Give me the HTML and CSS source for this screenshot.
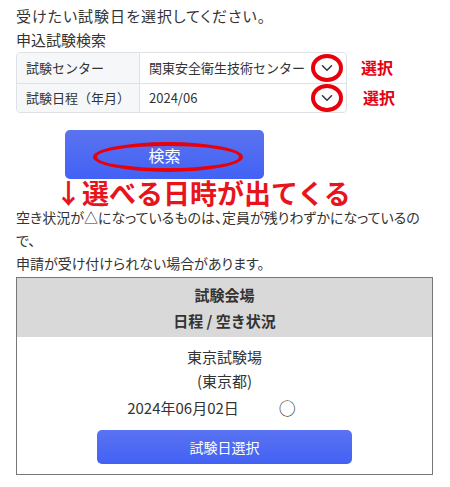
FILE: index.html
```html
<!DOCTYPE html>
<html lang="ja">
<head>
    <meta charset="UTF-8">
    <meta name="viewport" content="width=device-width, initial-scale=1.0">
    <title>申込試験検索</title>
    <link rel="stylesheet" href="styles.css">
</head>
<body>
    <div class="container">
        <p class="lead">受けたい試験日を選択してください。</p>
        <div class="search-title">申込試験検索</div>

        <div class="search-area">
            <div class="search-form">
                <div class="form-row">
                    <div class="form-label">試験センター</div>
                    <div class="form-select">
                        <span>関東安全衛生技術センター</span>
                        <span class="select-arrow">
                            <svg width="12" height="8" viewBox="0 0 12 8"><path d="M1.5 1.8 6 6.2 10.5 1.8" fill="none" stroke="#343a40" stroke-width="1.6" stroke-linecap="round" stroke-linejoin="round"/></svg>
                            <span class="mark-circle"></span>
                        </span>
                    </div>
                </div>
                <div class="form-row">
                    <div class="form-label">試験日程（年月）</div>
                    <div class="form-select">
                        <span>2024/06</span>
                        <span class="select-arrow">
                            <svg width="12" height="8" viewBox="0 0 12 8"><path d="M1.5 1.8 6 6.2 10.5 1.8" fill="none" stroke="#343a40" stroke-width="1.6" stroke-linecap="round" stroke-linejoin="round"/></svg>
                            <span class="mark-circle"></span>
                        </span>
                    </div>
                </div>
            </div>
            <div class="notes">
                <div class="note">選択</div>
                <div class="note second">選択</div>
            </div>
        </div>

        <button type="button" class="search-button">
            検索
            <span class="mark-ellipse"></span>
        </button>

        <div class="arrow-note">↓選べる日時が出てくる</div>

        <p class="info">空き状況が△になっているものは、定員が残りわずかになっているので、<br>申請が受け付けられない場合があります。</p>

        <div class="result-box">
            <div class="result-head">
                <div>試験会場</div>
                <div>日程 / 空き状況</div>
            </div>
            <div class="result-body">
                <div>東京試験場</div>
                <div>(東京都)</div>
                <div class="date-row">
                    <span>2024年06月02日</span>
                    <span class="status">○</span>
                </div>
                <button type="button" class="select-button">試験日選択</button>
            </div>
        </div>
    </div>
</body>
</html>
```

FILE: styles.css
```css
* {
    margin: 0;
    padding: 0;
    box-sizing: border-box;
    font-family: 'Noto Sans CJK JP', 'Noto Sans', sans-serif;
}

body {
    background-color: white;
    color: #333;
    font-size: 15px;
}

.container {
    padding: 4px 16px 0;
}

.lead {
    line-height: 24px;
    font-feature-settings: "palt";
    letter-spacing: 1px;
}

.search-title {
    line-height: 24px;
}

.search-area {
    display: flex;
    align-items: flex-start;
}

.search-form {
    width: 331px;
    border: 1px solid #dee2e6;
    border-radius: 4px;
    font-size: 13px;
    color: #333;
}

.form-row {
    display: flex;
    height: 29.5px;
}

.form-row + .form-row {
    border-top: 1px solid #dee2e6;
}

.form-label {
    width: 123px;
    padding-left: 9px;
    background-color: #f6f7f9;
    border-right: 1px solid #dee2e6;
    display: flex;
    align-items: center;
}

.form-row:first-child .form-label {
    border-top-left-radius: 4px;
}

.form-row:last-child .form-label {
    border-bottom-left-radius: 4px;
}

.form-select {
    flex: 1;
    display: flex;
    align-items: center;
    justify-content: space-between;
    padding-left: 9px;
    padding-right: 11px;
}

.select-arrow {
    position: relative;
    width: 16px;
    height: 16px;
    display: flex;
    align-items: center;
    justify-content: center;
}

.mark-circle {
    position: absolute;
    left: -8px;
    top: -6px;
    width: 32px;
    height: 28px;
    border: 4.5px solid #e8000b;
    border-radius: 50%;
}

.notes {
    padding-left: 14px;
    padding-top: 3px;
}

.note {
    color: #e60012;
    font-weight: bold;
    font-size: 16px;
    line-height: 24px;
}

.note.second {
    margin-top: 6px;
    padding-left: 2px;
}

.search-button {
    position: relative;
    display: block;
    width: 199px;
    height: 49px;
    margin: 17px 0 0 49px;
    border: none;
    border-radius: 5px;
    background: linear-gradient(#5a73ee, #4262f6);
    color: white;
    font-size: 16px;
}

.mark-ellipse {
    position: absolute;
    left: 28px;
    top: 12px;
    width: 150px;
    height: 30px;
    border: 4.5px solid #e8000b;
    border-radius: 50%;
}

.arrow-note {
    margin-left: 39px;
    color: #e8141b;
    font-size: 27px;
    font-weight: bold;
    line-height: 26px;
    padding-top: 1px;
}

.info {
    font-size: 14px;
    font-feature-settings: "palt";
    line-height: 23px;
}

.result-box {
    margin-top: 2px;
    width: 417px;
    border: 1px solid #777;
    text-align: center;
}

.result-head {
    background-color: #d9d9d9;
    font-weight: bold;
    line-height: 26px;
    padding: 4px 0 3px;
}

.result-body {
    padding: 8px 0 10px;
    line-height: 24px;
}

.date-row {
    display: flex;
    justify-content: center;
    gap: 40px;
    margin-top: 3px;
    padding-right: 26px;
}

.status {
    font-size: 17px;
}

.select-button {
    display: block;
    width: 255px;
    height: 34px;
    margin: 10px auto 0;
    border: none;
    border-radius: 5px;
    background: linear-gradient(#5a73f2, #4262f4);
    color: white;
    font-size: 14px;
}
```
